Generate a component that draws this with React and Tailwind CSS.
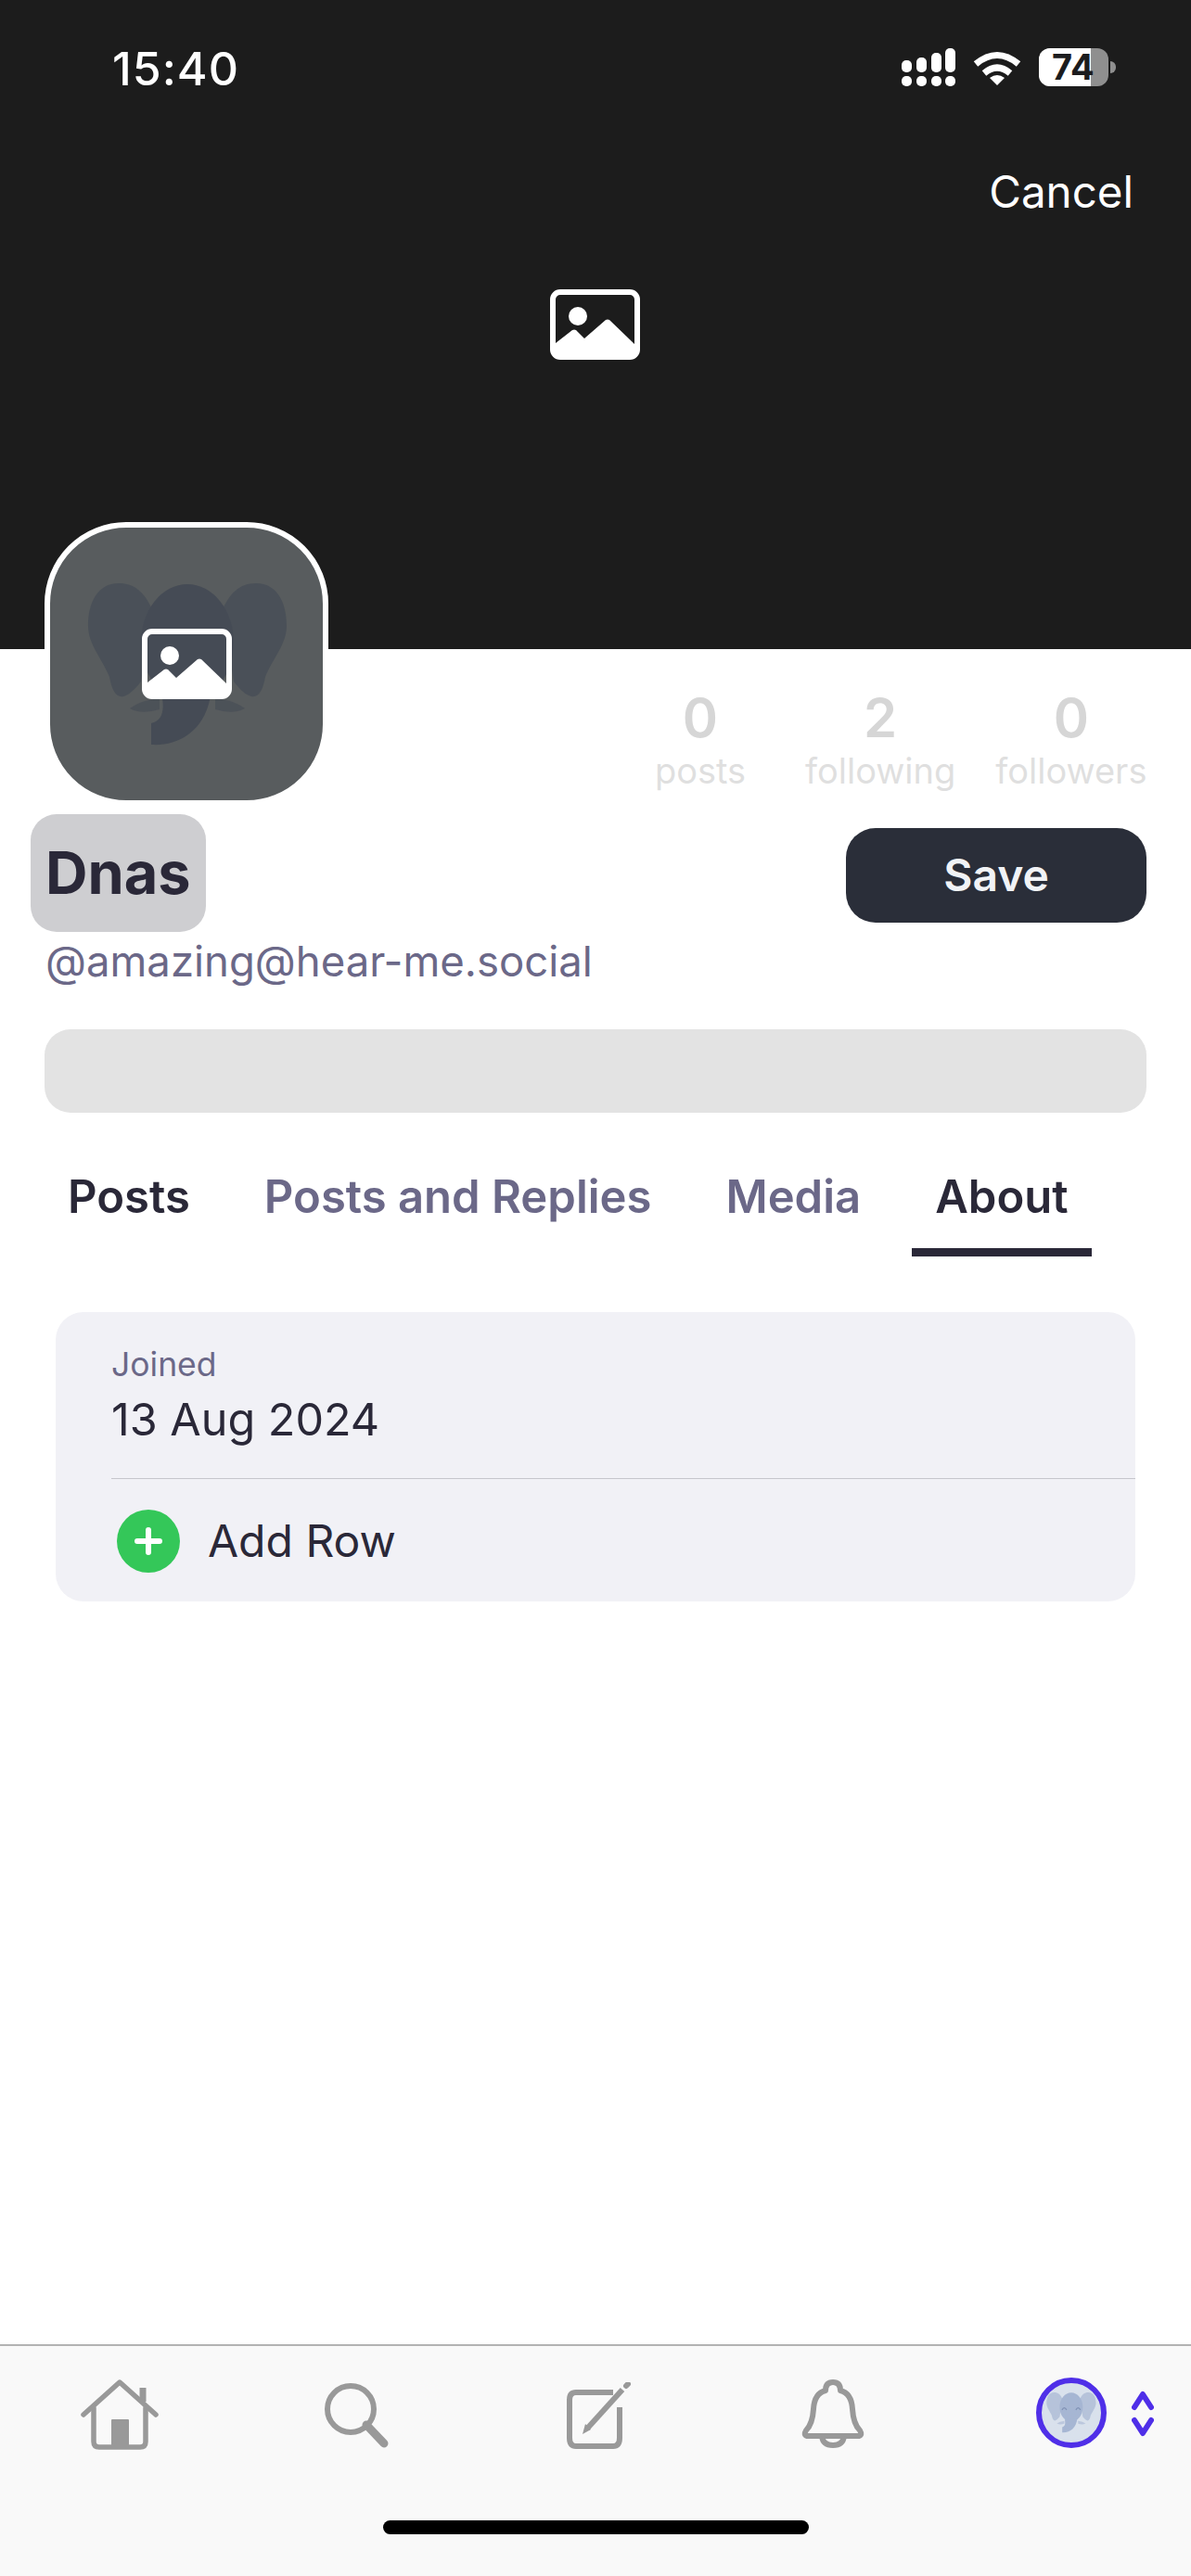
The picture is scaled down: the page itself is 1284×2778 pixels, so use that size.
import React from 'react';

const ImageIcon = ({ className }) => (
  <svg viewBox="0 0 97 76" className={className}>
    <rect x="3" y="3" width="91" height="70" rx="8" fill="none" stroke="#fff" strokeWidth="6" />
    <ellipse cx="30" cy="29" rx="10" ry="10" fill="#fff" />
    <path d="M6 58 L24 44 Q26 43 28 44 L37 53 L60 33 Q62 32 64 33 L91 59 V68 Q91 73 86 73 H11 Q6 73 6 68 Z" fill="#fff" />
  </svg>
);

const Elephant = ({ className, eyes }) => (
  <svg viewBox="0 0 225 185" className={className} fill="currentColor">
    <path d="M38 4 C15 4 5 25 5 50 C5 70 20 85 28 105 C32 128 42 136 62 110 L74 32 C66 14 55 4 38 4 Z" opacity="0.7" />
    <path d="M186 4 C209 4 219 25 219 50 C219 70 204 85 196 105 C192 128 182 136 162 110 L150 32 C158 14 169 4 186 4 Z" opacity="0.7" />
    <ellipse cx="112" cy="68" rx="50" ry="63" />
    <path d="M84 122 C88 142 85 152 73 155 L73 178 C106 180 134 160 138 118 Z" />
    <path d="M82 128 Q62 130 50 139 Q62 146 82 140 Z" opacity="0.6" />
    <path d="M142 128 Q162 130 174 139 Q162 146 142 140 Z" opacity="0.6" />
    {eyes && (
      <g fill="none" stroke="#8092b5" strokeWidth="5">
        <path d="M72 80 Q82 62 92 80" />
        <path d="M132 80 Q142 62 152 80" />
      </g>
    )}
  </svg>
);

const StatusBar = () => (
  <div className="flex items-start justify-between pl-[121px] pr-[81px] pt-[46px] h-[100px]">
    <span className="text-[50px] leading-[56px] font-medium text-white tracking-[1px]">15:40</span>
    <div className="flex items-start pt-[6px]">
      <svg viewBox="0 0 58 41" className="w-[58px] h-[41px]" fill="#fff">
        <rect x="0" y="13" width="11" height="13" rx="5" />
        <rect x="16" y="10" width="11" height="16" rx="5" />
        <rect x="32" y="5" width="11" height="21" rx="5" />
        <rect x="47" y="0" width="11" height="26" rx="5" />
        <rect x="0" y="30" width="11" height="11" rx="5" />
        <rect x="16" y="30" width="11" height="11" rx="5" />
        <rect x="32" y="30" width="11" height="11" rx="5" />
        <rect x="47" y="30" width="11" height="11" rx="5" />
      </svg>
      <svg viewBox="0 0 52 38" className="w-[52px] h-[38px] ml-[19px] mt-[3px]" fill="none" stroke="#fff" strokeWidth="7">
        <path d="M3 14 Q26 -5 49 14" />
        <path d="M12 24 Q26 12 40 24" />
        <path d="M18 29 Q26 23 34 29 L26 37 Z" fill="#fff" stroke="none" />
      </svg>
      <div className="relative ml-[19px] flex h-[41px] w-[75px] rounded-[12px] bg-[#8f8f8f]">
        <div className="h-full w-[56px] rounded-l-[12px] bg-white" />
        <span className="absolute left-[14px] top-0 text-[38px] leading-[41px] font-bold text-[#1c1c1e]">74</span>
      </div>
      <div className="ml-[2px] mt-[14px] h-[13px] w-[6px] rounded-r-full bg-[#8f8f8f]" />
    </div>
  </div>
);

const Stat = ({ value, label, className }) => (
  <div className={`flex flex-col items-center ${className}`}>
    <span className="text-[58px] leading-[67px] font-semibold text-[#d6d6d6]">{value}</span>
    <span className="text-[38px] leading-[46px] text-[#dfdfdf]">{label}</span>
  </div>
);

const tabs = ['Posts', 'Posts and Replies', 'Media', 'About'];

const Tabs = () => (
  <div className="mt-[61px] flex gap-[30px] pl-[48px]">
    {tabs.map((tab, i) => (
      <div
        key={tab}
        className={`h-[94px] border-b-[9px] px-[25px] text-[49px] leading-[60px] font-semibold ${
          i === 3 ? 'border-[#2a2838]' : 'border-transparent'
        } ${i === 0 || i === 3 ? 'text-[#2a2838]' : 'text-[#6b6888]'}`}
      >
        {tab}
      </div>
    ))}
  </div>
);

const BottomBar = () => (
  <div className="h-[250px] border-t-2 border-[#b3b3b3] bg-[#f9f9f9]">
    <div className="flex h-[188px] items-start pl-[86px] pt-[36px]">
      <svg viewBox="0 0 86 76" className="h-[76px] w-[86px]" fill="none" stroke="#999" strokeWidth="5.5" strokeLinecap="round">
        <path d="M4 38 L43 3 L82 38" strokeLinejoin="round" />
        <path d="M15 31 V67 Q15 73 21 73 H65 Q71 73 71 67 V31" />
        <path d="M68 24 V9" strokeWidth="7" strokeLinecap="butt" />
        <rect x="34" y="43" width="19" height="30" fill="#999" stroke="none" rx="1" />
      </svg>
      <svg viewBox="0 0 72 72" className="ml-[176px] mt-[3px] h-[72px] w-[72px]" fill="none" stroke="#999" strokeWidth="6">
        <circle cx="30" cy="29" r="25" />
        <path d="M47 46 L66 66" strokeWidth="9" strokeLinecap="round" />
      </svg>
      <svg viewBox="0 0 74 72" className="ml-[189px] mt-[3px] h-[72px] w-[74px]" fill="none" stroke="#999" strokeWidth="6">
        <path d="M52 11 H12 Q5 11 5 19 V60 Q5 69 12 69 H52 Q59 69 59 60 V27" />
        <path d="M24 50 L62 8" strokeWidth="6" />
        <path d="M19 56 L22 45 L28 51 Z" fill="#999" stroke="none" />
        <path d="M66 4 L68 2" strokeWidth="6" strokeLinecap="round" />
      </svg>
      <svg viewBox="0 0 68 74" className="ml-[181px] mt-0 h-[74px] w-[68px]" fill="none" stroke="#999" strokeWidth="6" strokeLinejoin="round">
        <path d="M34 3 Q42 3 42 12 Q54 15 55 32 Q56 48 63 55 Q66 60 62 61 H6 Q2 60 5 55 Q12 48 13 32 Q14 15 26 12 Q26 3 34 3 Z" />
        <path d="M22 61 Q23 71 34 71 Q45 71 46 61" />
      </svg>
      <div className="relative ml-[185px] -mt-[2px] flex h-[76px] w-[76px] items-center justify-center overflow-hidden rounded-full border-[6px] border-[#4f2fe8] bg-[#d9e1ec]">
        <Elephant eyes className="h-[50px] w-[56px] text-[#a6b6d3]" />
      </div>
      <svg viewBox="0 0 24 50" className="ml-[27px] mt-[12px] h-[50px] w-[24px]" fill="none" stroke="#4f2fe8" strokeWidth="6" strokeLinecap="round" strokeLinejoin="round">
        <path d="M3 18 L12 4 L21 18" />
        <path d="M3 32 L12 46 L21 32" />
      </svg>
    </div>
    <div className="mx-auto h-[15px] w-[459px] rounded-full bg-black" />
  </div>
);

export default function App() {
  return (
    <div className="flex h-[2778px] flex-col bg-white font-['Inter',sans-serif]">
      <div className="h-[700px] shrink-0 bg-[#1c1c1c]">
        <StatusBar />
        <div className="flex justify-end pr-[62px] pt-[82px]">
          <span className="text-[47.5px] leading-[50px] text-white">Cancel</span>
        </div>
        <div className="flex justify-center pr-[2px] pt-[80px]">
          <ImageIcon className="h-[76px] w-[97px]" />
        </div>
      </div>

      <div className="flex items-start pl-[48px]">
        <div className="relative -mt-[137px] flex h-[306px] w-[306px] shrink-0 items-center justify-center rounded-[88px] border-[6px] border-white bg-[#585c5e]">
          <Elephant className="absolute left-[36px] top-[56px] h-[185px] w-[225px] text-[#454b55]" />
          <ImageIcon className="relative h-[76px] w-[97px]" />
        </div>
        <div className="ml-[332px] flex pt-[41px]">
          <Stat value="0" label="posts" className="w-[138px]" />
          <Stat value="2" label="following" className="ml-[44px]" />
          <Stat value="0" label="followers" className="ml-[43px]" />
        </div>
      </div>

      <div className="mt-[9px] flex items-start justify-between pl-[33px] pr-[48px]">
        <div className="flex h-[127px] items-center rounded-[28px] bg-[#cecED1] px-[16px] text-[63px] font-bold text-[#2a2838]">
          Dnas
        </div>
        <div className="mt-[15px] flex h-[102px] w-[324px] items-center justify-center rounded-[32px] bg-[#2a2e39] text-[48px] font-semibold text-[#f1f3f6]">
          Save
        </div>
      </div>

      <div className="pl-[49px] text-[45.5px] leading-[64px] text-[#6b6888]">@amazing@hear-me.social</div>

      <div className="mx-[48px] mt-[41px] h-[90px] rounded-[28px] bg-[#e3e3e3]" />

      <Tabs />

      <div className="mx-[60px] mt-[60px] flex h-[312px] flex-col rounded-[30px] bg-[#f1f1f6] pl-[60px]">
        <div className="h-[180px] border-b border-[#c6c6cc] pt-[35px]">
          <div className="text-[35.5px] leading-[44px] text-[#6b6888]">Joined</div>
          <div className="mt-[8px] text-[48.5px] leading-[58px] text-[#2a2838]">13 Aug 2024</div>
        </div>
        <div className="flex flex-1 items-center pl-[6px] pt-[2px]">
          <div className="flex h-[68px] w-[68px] items-center justify-center rounded-full bg-[#34c759]">
            <svg viewBox="0 0 32 32" className="h-[32px] w-[32px]" fill="none" stroke="#fff" strokeWidth="6" strokeLinecap="round">
              <path d="M16 4 V28 M4 16 H28" />
            </svg>
          </div>
          <span className="ml-[30px] text-[48px] leading-[58px] text-[#2a2838]">Add Row</span>
        </div>
      </div>

      <div className="flex-1" />
      <BottomBar />
    </div>
  );
}
